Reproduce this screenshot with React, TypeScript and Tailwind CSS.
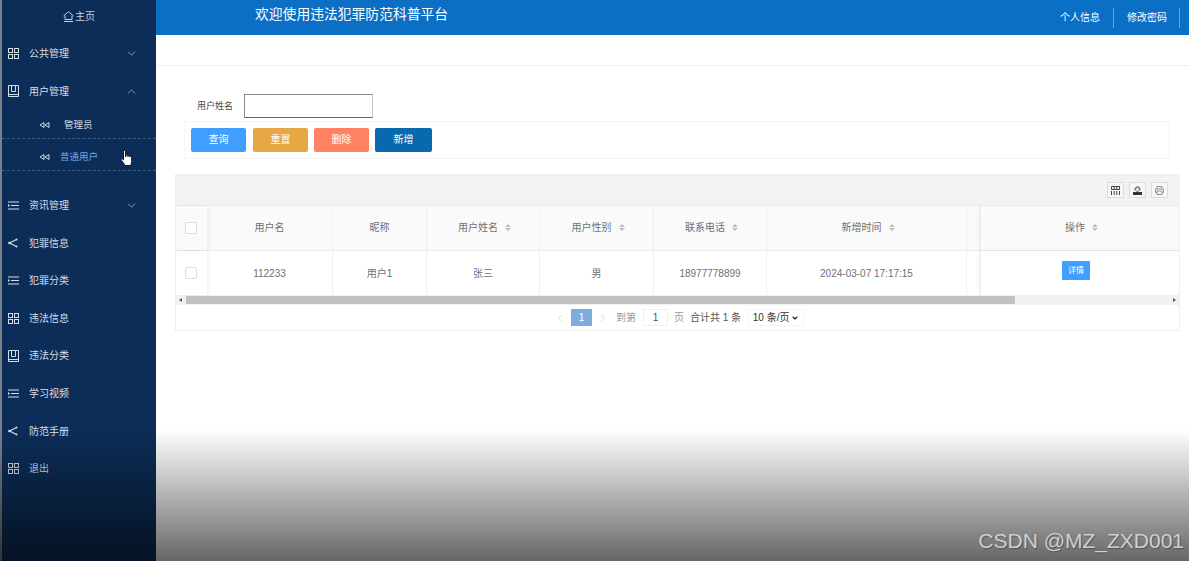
import React from "react";
import { ChevronDown, ChevronUp, ChevronLeft, ChevronRight } from "lucide-react";

const cjk = { fontFamily: '"Liberation Sans", "Noto Sans CJK SC", sans-serif' };

function GridIcon() {
  return (
    <svg width="11" height="11" viewBox="0 0 11 11" fill="none" stroke="#d5dde8" strokeWidth="1">
      <rect x="0.5" y="0.5" width="4" height="4" />
      <rect x="6.5" y="0.5" width="4" height="4" />
      <rect x="0.5" y="6.5" width="4" height="4" />
      <rect x="6.5" y="6.5" width="4" height="4" />
    </svg>
  );
}

function BookIcon() {
  return (
    <svg width="11" height="12" viewBox="0 0 11 12" fill="none" stroke="#d5dde8" strokeWidth="1">
      <path d="M0.5 0.5h10v11h-10z" />
      <path d="M3.5 0.5v6h4v-6M0.5 9.5h10" />
    </svg>
  );
}

function ListIcon() {
  return (
    <svg width="11" height="9" viewBox="0 0 11 9" fill="none" stroke="#d5dde8" strokeWidth="1">
      <path d="M0 1h11M3 4.500h8M0 8h11" />
      <path d="M0 3l2 1.500l-2 1.500z" fill="#d5dde8" stroke="none" />
    </svg>
  );
}

function ShareIcon() {
  return (
    <svg width="10" height="10" viewBox="0 0 10 10" fill="#d5dde8" stroke="#d5dde8" strokeWidth="1.200">
      <path d="M8.500 1.500L1.500 5l7 3.500" fill="none" />
      <circle cx="8.500" cy="1.500" r="1" stroke="none" />
      <circle cx="1.500" cy="5" r="1.300" stroke="none" />
      <circle cx="8.500" cy="8.500" r="1" stroke="none" />
    </svg>
  );
}

function RewindIcon() {
  return (
    <svg width="11" height="6" viewBox="0 0 11 6" fill="none" stroke="#cfd8e4" strokeWidth="1">
      <path d="M5 0.500L1 3l4 2.500zM10 0.500L6 3l4 2.500z" />
    </svg>
  );
}

function HomeIcon() {
  return (
    <svg width="11" height="11" viewBox="0 0 11 11" fill="none" stroke="#c5d0de" strokeWidth="1">
      <path d="M0.500 5L5.500 0.700L10.500 5M2 4.500v4h7v-4M1 10.500h9" />
    </svg>
  );
}

function HandCursor() {
  return (
    <svg width="13" height="17" viewBox="0 0 13 17" fill="#fff" stroke="#111" strokeWidth="1" className="absolute left-[118px] top-[11px]">
      <path d="M3.500 1.500c0-1.300 2-1.300 2 0v5l0.500 0v-1c0-1 1.800-1 1.800 0v1h0.400v-.6c0-1 1.700-1 1.700 0v1h0.300c0-.8 1.500-.8 1.500 0.200v4.400c0 1.500-.6 2.500-1 4H5c-.5-1.500-2-3-3.500-5-.8-1 .2-2.200 1.200-1.400l.8 .8z" />
    </svg>
  );
}

const topItems = [
  { label: "资讯管理", icon: <ListIcon />, arrow: true },
  { label: "犯罪信息", icon: <ShareIcon /> },
  { label: "犯罪分类", icon: <ListIcon /> },
  { label: "违法信息", icon: <GridIcon /> },
  { label: "违法分类", icon: <BookIcon /> },
  { label: "学习视频", icon: <ListIcon /> },
  { label: "防范手册", icon: <ShareIcon /> },
  { label: "退出", icon: <GridIcon /> },
];

function MenuRow({ label, icon, arrow }: { label: string; icon: React.ReactNode; arrow?: "up" | "down" }) {
  return (
    <div className="flex h-[37.6px] items-center pl-[6px] pr-[18px] text-[10px] text-[#d5dde8]">
      <span className="flex w-[21px] items-center">{icon}</span>
      <span className="flex-1">{label}</span>
      {arrow === "down" && <ChevronDown size={13} strokeWidth={1.200} className="text-[#c5d0de]" />}
      {arrow === "up" && <ChevronUp size={13} strokeWidth={1.200} className="text-[#c5d0de]" />}
    </div>
  );
}

function SortMark() {
  return (
    <span className="ml-[7px] inline-flex flex-col gap-[1px]">
      <span className="h-0 w-0 border-x-[3px] border-b-[3px] border-x-transparent border-b-[#bdbdbd]" />
      <span className="h-0 w-0 border-x-[3px] border-t-[3px] border-x-transparent border-t-[#bdbdbd]" />
    </span>
  );
}

function Checkbox() {
  return <span className="block h-[12px] w-[12px] rounded-[2px] border border-[#dedede] bg-white" />;
}

const headers = [
  { label: "用户名" },
  { label: "昵称" },
  { label: "用户姓名", sort: true },
  { label: "用户性别", sort: true },
  { label: "联系电话", sort: true },
  { label: "新增时间", sort: true },
];

const cells = ["112233", "用户1", "张三", "男", "18977778899", "2024-03-07 17:17:15"];

const gridCols = "grid grid-cols-[31px_126px_94px_113px_114px_113px_200px_13px_1fr]";

export default function App() {
  return (
    <div className="relative flex h-[561px] w-[1189px] overflow-hidden bg-white" style={cjk}>
      {/* Sidebar */}
      <aside className="w-[156px] shrink-0 border-l-2 border-[#77818c] bg-[#0c2d57]">
        <div className="flex h-[35px] items-center justify-center gap-[1px] pb-[3px] text-[10px] text-[#c5d0de]">
          <HomeIcon />
          <span>主页</span>
        </div>
        <MenuRow label="公共管理" icon={<GridIcon />} arrow="down" />
        <MenuRow label="用户管理" icon={<BookIcon />} arrow="up" />
        <div className="flex h-[28.500px] items-center border-b border-dashed border-[#3d5a7e] pl-[37px] pt-[3px] text-[9.500px] text-[#d5dde8]">
          <RewindIcon />
          <span className="ml-[14px]">管理员</span>
        </div>
        <div className="relative flex h-[32px] items-center border-b border-dashed border-[#3d5a7e] pl-[37px] pt-[5px] text-[9.500px] text-[#6fa8ea]">
          <RewindIcon />
          <span className="ml-[10px]">普通用户</span>
          <HandCursor />
        </div>
        <div className="mt-[16px]">
          {topItems.map((item) => (
            <MenuRow key={item.label} label={item.label} icon={item.icon} arrow={item.arrow ? "down" : undefined} />
          ))}
        </div>
      </aside>

      <div className="flex min-w-0 flex-1 flex-col">
        {/* Top bar */}
        <header className="flex h-[35px] shrink-0 items-center bg-[#0c6fc6] pl-[99px] text-white">
          <span className="flex-1 pb-[4px] text-[13.800px]">欢迎使用违法犯罪防范科普平台</span>
          <span className="text-[10px]">个人信息</span>
          <span className="mx-[13px] h-[20px] w-px bg-[#6aa6dc]" />
          <span className="text-[10px]">修改密码</span>
          <span className="ml-[12px] h-[20px] w-px bg-[#6aa6dc]" />
          <span className="w-[9px]" />
        </header>

        <div className="h-[31px] shrink-0 border-b border-[#efefef]" />

        {/* Search */}
        <div className="ml-[28px] mr-[19px] mt-[27px] flex h-[26px] items-center">
          <span className="ml-[13px] w-[47px] pt-[2px] text-[9px] text-[#444]">用户姓名</span>
          <input className="h-[24px] w-[129px] border border-t-[#8a8a8a] border-l-[#8a8a8a] border-r-[#c4c4c4] border-b-[#666] bg-white" />
        </div>
        <div className="ml-[28px] mr-[19px] mt-[2px] flex h-[38px] items-center gap-[7px] border border-[#f5f5f5] pb-[1px] pl-[6px]">
          <button className="h-[24px] w-[55px] rounded-[2px] bg-[#409eff] pb-[1px] text-[10px] text-white">查询</button>
          <button className="h-[24px] w-[55px] rounded-[2px] bg-[#e8a745] pb-[1px] text-[10px] text-white">重置</button>
          <button className="-ml-[1px] h-[24px] w-[55px] rounded-[2px] bg-[#ff8264] pb-[1px] text-[10px] text-white">删除</button>
          <button className="-ml-[1px] h-[24px] w-[57px] rounded-[2px] bg-[#0869ae] pb-[1px] text-[10px] text-white">新增</button>
        </div>

        {/* Table */}
        <div className="ml-[19px] mr-[9px] mt-[15px] border border-[#f0f0f0] text-[10px] text-[#707070]">
          <div className="flex h-[31px] items-center justify-end gap-[5px] border-b border-[#eaeaea] bg-[#f2f2f2] pr-[11px]">
            <span className="flex h-[16px] w-[17px] items-center justify-center border border-[#dcdcdc] bg-[#f7f7f7]">
              <svg width="9" height="9" viewBox="0 0 9 9" fill="none" stroke="#444" strokeWidth="1">
                <path d="M0.500 0.500h8v3h-8zM0.500 5v4M3.200 5v4M5.800 5v4M8.500 5v4M3.200 0.500v3M5.800 0.500v3" />
              </svg>
            </span>
            <span className="flex h-[16px] w-[17px] items-center justify-center border border-[#dcdcdc] bg-[#f7f7f7]">
              <svg width="9" height="9" viewBox="0 0 9 9" fill="#333">
                <path d="M0 6h9v3H0z" />
                <path d="M3 1h3v2h1.500L4.500 6 1.500 3H3z" fill="none" stroke="#333" strokeWidth="0.800" />
              </svg>
            </span>
            <span className="flex h-[16px] w-[17px] items-center justify-center border border-[#dcdcdc] bg-[#f7f7f7]">
              <svg width="9" height="9" viewBox="0 0 9 9" fill="none" stroke="#888" strokeWidth="0.900">
                <path d="M2 3V0.500h5V3M2 6.500H0.500V3h8v3.500H7M2 5h5v3.500H2z" />
              </svg>
            </span>
          </div>

          <div className={`${gridCols} h-[45px] border-b border-[#eaeaea] bg-[#fafafa]`}>
            <div className="flex items-center justify-center pr-[2px] shadow-[2px_0_3px_rgba(0,0,0,0.06)]">
              <Checkbox />
            </div>
            {headers.map((h) => (
              <div key={h.label} className={`flex items-center justify-center border-r border-[#f0f0f0] pb-[2px] ${h.sort ? "pl-[3px]" : ""}`}>
                {h.label}
                {h.sort && <SortMark />}
              </div>
            ))}
            <div />
            <div className="flex items-center justify-center border-l border-[#ebebeb] pb-[2px] pl-[3px] shadow-[-2px_0_3px_rgba(0,0,0,0.04)]">
              操作
              <SortMark />
            </div>
          </div>

          <div className={`${gridCols} h-[44px]`}>
            <div className="flex items-center justify-center pr-[2px] shadow-[2px_0_3px_rgba(0,0,0,0.06)]">
              <Checkbox />
            </div>
            {cells.map((c) => (
              <div key={c} className="flex items-center justify-center border-r border-[#f0f0f0]">
                {c}
              </div>
            ))}
            <div />
            <div className="flex justify-center border-l border-[#ebebeb] pr-[8px] pt-[10px] shadow-[-2px_0_3px_rgba(0,0,0,0.04)]">
              <span className="flex h-[19px] w-[28px] items-center justify-center rounded-[1px] bg-[#409eff] text-[8px] text-white">详情</span>
            </div>
          </div>

          {/* Horizontal scrollbar */}
          <div className="flex h-[10px] items-center bg-[#f1f1f1]">
            <span className="ml-[3px] h-0 w-0 border-y-[2px] border-r-[3px] border-y-transparent border-r-[#555]" />
            <span className="ml-[4px] h-[8px] w-[829px] bg-[#c1c1c1]" />
            <span className="ml-auto mr-[3px] h-0 w-0 border-y-[2px] border-l-[3px] border-y-transparent border-l-[#555]" />
          </div>

          {/* Pager */}
          <div className="flex h-[25px] items-center pl-[378px] text-[#999]">
            <ChevronLeft size={12} strokeWidth={1.500} className="text-[#c8c8c8]" />
            <span className="ml-[5px] flex h-[17px] w-[21px] items-center justify-center bg-[#7baee0] text-white">1</span>
            <ChevronRight size={12} strokeWidth={1.500} className="ml-[5px] text-[#c8c8c8]" />
            <span className="ml-[7px]">到第</span>
            <span className="ml-[7px] flex h-[17px] w-[25px] items-center justify-center border border-[#f0f0f0] text-[#555]">1</span>
            <span className="ml-[6px]">页</span>
            <span className="ml-[6px] text-[#555]">合计共 1 条</span>
            <span className="ml-[7px] flex h-[17px] w-[56px] items-center justify-center gap-[2px] border border-[#f5f5f5] text-[#333]">
              10 条/页
              <ChevronDown size={8} strokeWidth={3.500} className="text-[#222]" />
            </span>
          </div>
        </div>
      </div>

      {/* Bottom fade over the whole page */}
      <div className="pointer-events-none absolute inset-x-0 bottom-0 h-[131px] bg-gradient-to-b from-black/0 to-black/60" />
      <span
        className="absolute bottom-[7px] right-[5px] text-[21px] leading-[26px] text-[#cfcfcf] [text-shadow:1px_1px_1px_rgba(0,0,0,0.3)]"
        style={{ fontFamily: '"Liberation Sans", sans-serif' }}
      >
        CSDN @MZ_ZXD001
      </span>
    </div>
  );
}
